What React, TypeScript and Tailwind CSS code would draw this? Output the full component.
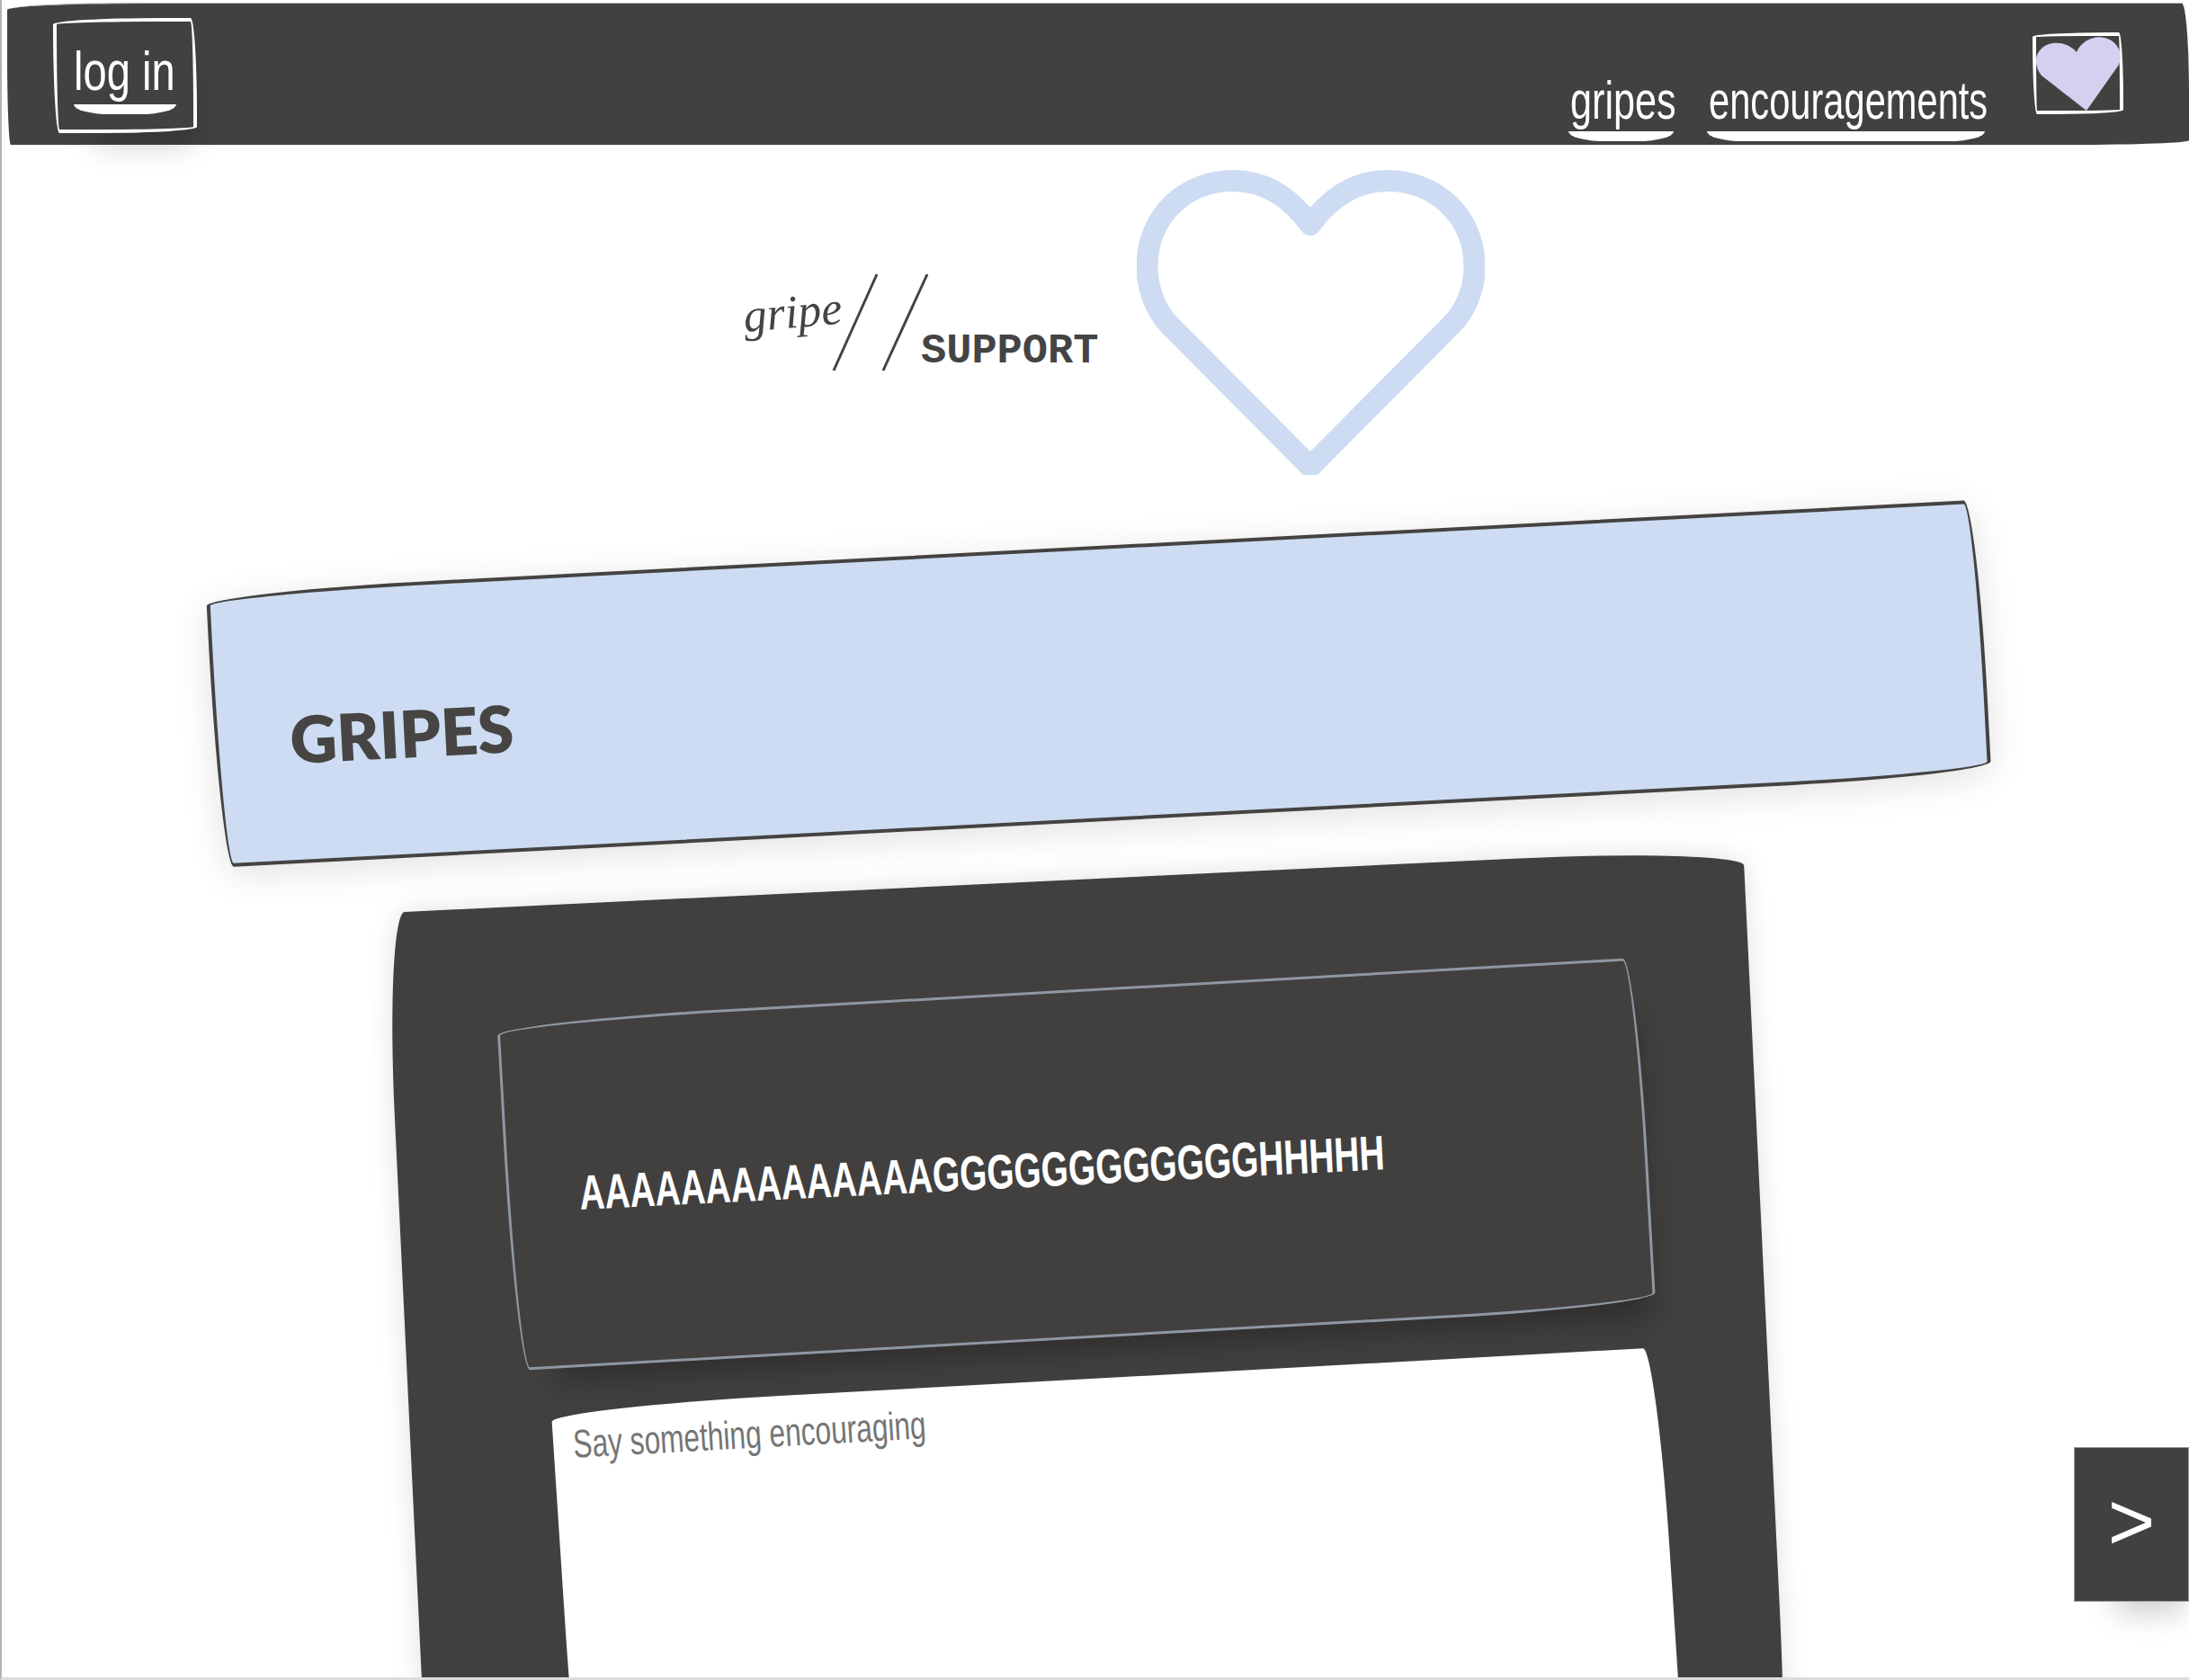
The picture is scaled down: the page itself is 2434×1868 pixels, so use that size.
const sketchy = "rounded-[255px_15px_225px_15px/15px_225px_15px_255px]";

const NavLink = ({ label, textClass }: { label: string; textClass: string }) => {
  return (
    <div className="flex flex-col items-stretch">
      <span className={`origin-left whitespace-nowrap text-[60px] leading-[60px] text-white ${textClass}`}>{label}</span>
      <div className="mt-[4px] h-[11px] bg-white rounded-b-[40px_11px]"></div>
    </div>
  );
};

const Nav = () => {
  return (
    <div className="relative ml-[6px] mt-[3px] flex h-[158px] shrink-0 justify-between rounded-[150px_8px_130px_4px/8px_100px_5px_100px] border-t border-[#b8b8b8] bg-[#42413f] font-['Liberation_Sans',sans-serif]">
      <div className={`ml-[51px] mt-[16px] flex h-[128px] w-[160px] flex-col items-stretch border-4 border-white px-[19px] pt-[23px] shadow-[20px_38px_34px_-26px_rgba(0,0,0,0.2)] ${sketchy}`}>
        <span className="origin-left scale-x-[0.76] whitespace-nowrap text-[62px] leading-[64px] text-white">log in</span>
        <div className="mt-[5px] h-[11px] bg-white rounded-b-[40px_11px]"></div>
      </div>
      <div className="flex items-end pb-[4px] pr-[73px]">
        <div className="flex gap-[37px]">
          <NavLink label="gripes" textClass="ml-[2px] w-[115px] scale-x-[0.72]" />
          <NavLink label="encouragements" textClass="ml-[2px] w-[307px] scale-x-[0.694]" />
        </div>
        <div className={`mb-[30px] ml-[53px] h-[91px] w-[101px] border-4 border-white ${sketchy}`}>
          <svg width="101" height="91" viewBox="0 0 101 91" className="-ml-[4px] -mt-[4px] block">
            <path d="M60 87 L10 48 C2 38 2 26 9 19 C18 9 38 9 49 22 C54 10 68 3 80 6 C95 9 101 24 96 36 Z" fill="#d6cff0" />
          </svg>
        </div>
      </div>
    </div>
  );
};

const Logo = () => {
  return (
    <div className="ml-[831px] flex h-[339px] shrink-0 text-[#444]">
      <span className="mt-[128px] w-[109px] -rotate-[5deg] font-['Liberation_Serif',serif] text-[52px] italic leading-[60px]">gripe</span>
      <svg width="112" height="109" viewBox="0 0 112 109" className="-ml-[17px] mt-[115px]">
        <path d="M50 1 L2 108 M106 1 L57 108" stroke="#444" strokeWidth="3" fill="none" />
      </svg>
      <span className="-ml-[13px] mt-[175px] h-[54px] font-['Liberation_Mono',monospace] text-[47px] font-bold leading-[54px]">SUPPORT</span>
      <svg width="387" height="339" viewBox="0 0 387 339" className="ml-[43px]">
        <path
          d="M193 330 L36 172 C20 155 11.5 130 11.5 108 C11.5 50 55 12 107 12 C145 12 172 32 193 61 C214 32 241 12 279 12 C331 12 375.5 50 375.5 108 C375.5 130 367 155 350 172 Z"
          fill="none"
          stroke="#cddcf2"
          strokeWidth="24"
          strokeLinejoin="round"
        />
      </svg>
    </div>
  );
};

const App = () => {
  return (
    <div className="relative flex h-[1868px] flex-col overflow-hidden border-b-[3px] border-l-2 border-b-[#dcdcdc] border-l-[#b4b4b4] bg-white">
      <Nav />
      <div className="mt-[28px]">
        <Logo />
      </div>

      <div className={`ml-[227px] mt-[131px] flex h-[306px] w-[1972px] shrink-0 origin-top-left -rotate-[3deg] items-center border-4 border-[#444341] bg-[#cddcf2] pl-[81px] pt-[28px] shadow-[0_8px_40px_rgba(0,0,0,0.12)] ${sketchy}`}>
        <span className="font-['Lato',sans-serif] text-[72px] font-extrabold leading-none text-[#464543]">GRIPES</span>
      </div>

      <div className="ml-[426px] mt-[50px] h-[1100px] w-[1512px] shrink-0 origin-top-left -rotate-[2.75deg] rounded-[22px_255px_15px_225px/225px_20px_255px_15px] bg-[#41403f] pl-[120px] pt-[122px] shadow-[0_0_30px_rgba(0,0,0,0.12)]">
        <div className={`relative z-10 flex h-[388px] w-[1269px] -rotate-[0.5deg] items-center border-[3px] border-[#8f97a3] bg-[#41403f] pl-[78px] shadow-[20px_38px_34px_-26px_rgba(0,0,0,0.3)] ${sketchy}`}>
          <span className="origin-left rotate-[0.4deg] scale-x-[0.72] whitespace-nowrap font-['Liberation_Sans',sans-serif] text-[54px] font-bold leading-none text-white">AAAAAAAAAAAAAAGGGGGGGGGGGGHHHHH</span>
        </div>
        <div className={`ml-[38px] mt-[45px] h-[500px] w-[1231px] origin-top skew-x-[0.6deg] -rotate-[0.4deg] bg-white pl-[22px] pt-[18px] ${sketchy}`}>
          <p className="origin-left scale-x-[0.72] whitespace-nowrap font-['Liberation_Sans',sans-serif] text-[44px] leading-[46px] text-[#757575]">Say something encouraging</p>
        </div>
      </div>

      <div className="absolute bottom-[84px] right-0 flex h-[172px] w-[128px] items-center justify-center border border-[#999] bg-[#42413f] pb-[6px] font-['Liberation_Sans',sans-serif] text-[90px] leading-none text-white shadow-[20px_38px_34px_-26px_rgba(0,0,0,0.2)]">
        &gt;
      </div>
    </div>
  );
};

export default App;
